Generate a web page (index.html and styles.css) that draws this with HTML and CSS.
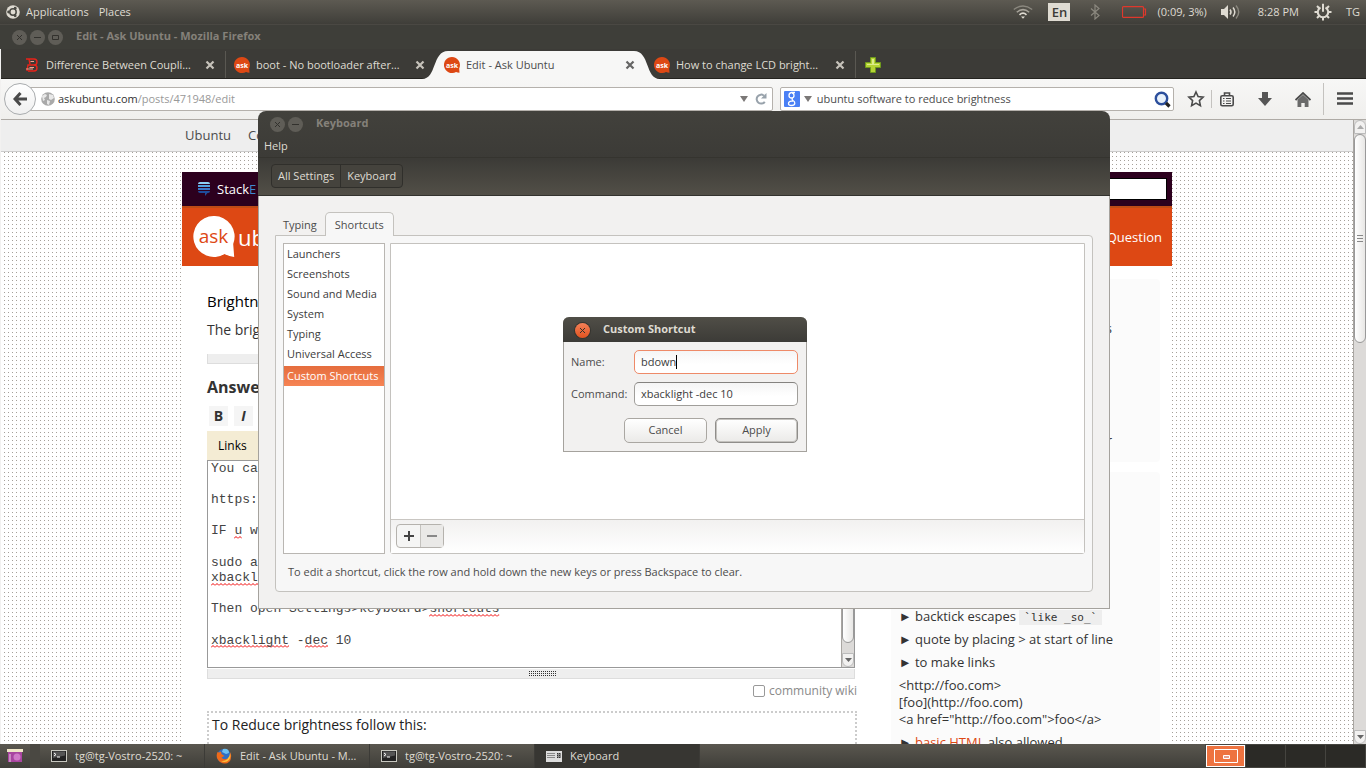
FILE: index.html
```html
<!DOCTYPE html>
<html lang="en">
<head>
<meta charset="utf-8">
<title>Edit - Ask Ubuntu</title>
<link rel="stylesheet" href="styles.css">
</head>
<body>
<svg class="defs" width="0" height="0" aria-hidden="true">
  <defs>
    <pattern id="wavy" width="4" height="3" patternUnits="userSpaceOnUse"><path d="M0 2.5 L2 .5 L4 2.5" fill="none" stroke="#f00000" stroke-width="1"/></pattern>
    <symbol id="ask" viewBox="0 0 16 16"><path d="M8 0a8 8 0 1 0 4 14.900q1.500.7 3.500.9l-.3-4.400A8 8 0 0 0 8 0z" fill="#dd4814"/><text x="8" y="10.500" text-anchor="middle" font-family="Open Sans, sans-serif" font-weight="700" font-size="7" fill="#fff">ask</text></symbol>
    <symbol id="x" viewBox="0 0 10 10"><path d="M1.500 1.500l7 7M8.500 1.500l-7 7" stroke="currentColor" stroke-width="2.200" opacity=".85"/></symbol>
    <symbol id="term" viewBox="0 0 16 12"><rect x=".5" y=".5" width="15" height="11" fill="#222" stroke="#c8c8c0"/><path d="M2 1.500h12v4L2 8z" fill="#555"/><path d="M3 3l2 1.500L3 6M6 7h3" fill="none" stroke="#fff"/></symbol>
  </defs>
</svg>

<div class="desktop">
  <header class="panel">
    <nav class="panel-menus">
      <svg width="14" height="14" viewBox="0 0 14 14"><circle cx="7" cy="7" r="6.800" fill="#dfdbd2"/><circle cx="7" cy="7" r="3.200" fill="none" stroke="#4b4a44" stroke-width="1.500"/><g fill="#4b4a44"><circle cx="2.600" cy="7" r="1.400"/><circle cx="9.200" cy="3.200" r="1.400"/><circle cx="9.200" cy="10.800" r="1.400"/></g></svg>
      <button class="plain">Applications</button>
      <button class="plain places">Places</button>
    </nav>
    <div class="tray">
      <svg class="wifi" width="20" height="14" viewBox="0 0 20 14" fill="none"><path d="M.8 4.500Q10-2.500 19.200 4.500" stroke="#8b887f" stroke-width="1.400"/><path d="M3.800 7.200Q10 2 16.200 7.200" stroke="#a8a49b" stroke-width="1.500"/><path d="M6.500 9.800Q10 6.500 13.500 9.800" stroke="#dfdbd2" stroke-width="1.600"/><path d="M8 11.500h4L10 13.800z" fill="#dfdbd2"/></svg>
      <span class="lang">En</span>
      <svg class="bt" width="10" height="16" viewBox="0 0 10 16"><path d="M1 4.500l8 7L5 15V1l4 3.500-8 7" fill="none" stroke="#8b887f" stroke-width="1.200"/></svg>
      <svg class="batt" width="25" height="12" viewBox="0 0 25 12"><path d="M1.500.6h19q1 0 1 1v8.800q0 1-1 1h-19q-1 0-1-1V1.600q0-1 1-1zM21.500 3h2v6h-2" fill="none" stroke="#df382c" stroke-width="1.200"/></svg>
      <span class="battery-text">(0:09, 3%)</span>
      <svg class="vol" width="20" height="16" viewBox="0 0 20 16" fill="none"><path d="M0 5h3l4-4v14l-4-4H0z" fill="#dfdbd2"/><path d="M9 5.500q2 2.500 0 5M12 3.500q3.600 4.500 0 9" stroke="#dfdbd2" stroke-width="1.500"/><path d="M15 1.500q5.500 6.500 0 13" stroke="#8b887f" stroke-width="1.400"/></svg>
      <span class="clock">8:28 PM</span>
      <svg class="gear" width="18" height="18" viewBox="0 0 18 18" fill="none" stroke="#dfdbd2"><path d="M6.500 4.500a5.200 5.200 0 1 0 5 0M9 .8v8" stroke-width="2"/><path d="M3 3l2 2M15 3l-2 2M.5 9h3M14.500 9h3M3 15l2-2M15 15l-2-2M9 14.500v3" stroke-width="2"/></svg>
      <span>TG</span>
    </div>
  </header>

  <div class="browser-title">
    <button class="wb" aria-label="Close"><svg width="7" height="7" viewBox="0 0 7 7"><path d="M1 1l5 5M6 1L1 6"/></svg></button>
    <button class="wb" aria-label="Minimize"><svg width="7" height="7" viewBox="0 0 7 7"><path d="M0 3.500h7"/></svg></button>
    <button class="wb" aria-label="Maximize"><svg width="7" height="7" viewBox="0 0 7 7"><path d="M.5 1.500h6v4h-6z"/></svg></button>
    <strong>Edit - Ask Ubuntu - Mozilla Firefox</strong>
  </div>

  <div class="browser">
    <div class="tabs">
      <div class="tab"><svg width="16" height="16" viewBox="0 0 16 16" fill="none"><path d="M2 2h8M4 14h6q3 0 3-3t-3-3q3 0 3-3t-3-3M5 2l1 5M3 14l1-6h6" stroke="#e8231a" stroke-width="1.400"/><path d="M6.500 4.500H10M5.500 10.500H10M2 12h7" stroke="#f3a08c" stroke-width="1.200"/></svg><a href="#">Difference Between Coupli…</a><button aria-label="Close tab"><svg width="10" height="10"><use href="#x"/></svg></button></div>
      <div class="tab"><svg width="16" height="16"><use href="#ask"/></svg><a href="#">boot - No bootloader after…</a><button aria-label="Close tab"><svg width="10" height="10"><use href="#x"/></svg></button></div>
      <div class="tab active"><svg class="curve left" width="28" height="28" viewBox="0 0 28 28"><path d="M0 28C15 28 10 0 26 0h2v28z" fill="#f7f7f6"/></svg><svg class="curve right" width="28" height="28" viewBox="0 0 28 28"><path d="M28 28C13 28 18 0 2 0H0v28z" fill="#f7f7f6"/></svg><svg width="16" height="16"><use href="#ask"/></svg><a href="#">Edit - Ask Ubuntu</a><button aria-label="Close tab"><svg width="10" height="10"><use href="#x"/></svg></button></div>
      <div class="tab last"><svg width="16" height="16"><use href="#ask"/></svg><a href="#">How to change LCD bright…</a><button aria-label="Close tab"><svg width="10" height="10"><use href="#x"/></svg></button></div>
      <button class="newtab" aria-label="New tab"><svg width="16" height="16" viewBox="0 0 16 16"><path d="M5.500.5h5v5h5v5h-5v5h-5v-5h-5v-5h5z" fill="#b5d334" stroke="#6f9a1c"/><path d="M7 2h2v5h5v1H2V7h5z" fill="#dcec8c"/></svg></button>
    </div>

    <div class="navbar">
      <button class="back" aria-label="Back"><svg width="14" height="14" viewBox="0 0 14 14"><path d="M7.500 1L2 7l5.500 6M2 7h12" fill="none" stroke="#4a4a4a" stroke-width="3"/></svg></button>
      <div class="urlbar">
        <svg width="14" height="14" viewBox="0 0 14 14"><circle cx="7" cy="7" r="6.800" fill="#a9a9a9"/><path d="M1 4l3-2 2 1-1 2-2 1 1 2-2 1zM8 2l4 1 1 3-3 2-2-1zM6 8l3 1-1 4-2-1z" fill="#e8e8e8"/></svg>
        <a class="address" href="#">askubuntu.com<span>/posts/471948/edit</span></a>
        <svg width="8" height="6" viewBox="0 0 8 6"><path d="M0 0h8L4 6z" fill="#7b7877"/></svg>
        <svg width="12" height="12" viewBox="0 0 12 12"><path d="M9.800 8.800A4.500 4.500 0 1 1 9 2.600" fill="none" stroke="#98a2ab" stroke-width="2"/><path d="M11.500 0v5.500H6z" fill="#98a2ab"/></svg>
      </div>
      <div class="searchbar">
        <svg width="16" height="16" viewBox="0 0 16 16"><rect width="16" height="16" rx="1" fill="#4a80f5"/><path d="M11 1.500H7.500Q5 2 5 4.500T7.500 7 10 4.500 8 2M8.500 7.200Q7.500 8.500 9 9.500q2 1.200 1.800 2.800Q10.500 14.500 7.500 14.500T4.500 12.500 7.500 10.200H9" fill="none" stroke="#fff" stroke-width="1.300"/></svg>
        <svg width="8" height="6" viewBox="0 0 8 6"><path d="M0 0h8L4 6z" fill="#7b7877"/></svg>
        <input aria-label="Search" value="ubuntu software to reduce brightness">
        <svg width="17" height="17" viewBox="0 0 17 17"><circle cx="7.500" cy="7.500" r="5.700" fill="#e8f1fa" stroke="#2c4f9c" stroke-width="2.400"/><path d="M12 12l3.500 3.500" stroke="#222" stroke-width="3.200"/></svg>
      </div>
      <div class="tools">
        <button aria-label="Bookmark"><svg width="18" height="18" viewBox="0 0 18 18"><path d="M9 2l2.100 4.600 5 .6-3.700 3.400 1 5L9 13.100l-4.400 2.500 1-5L1.900 7.200l5-.6z" fill="none" stroke="#4a4a4a" stroke-width="1.600"/></svg></button>
        <i class="rule"></i>
        <button class="list-btn" aria-label="Bookmarks menu"><svg width="14" height="15" viewBox="0 0 14 15" fill="none" stroke="#4a4a4a"><rect x=".8" y="3.800" width="12.400" height="10" rx="1.500" stroke-width="1.600"/><path d="M4.500 3V1h5v2" stroke-width="1.600"/><path d="M3 6.500h1.500M6 6.500h5M3 9h1.500M6 9h5M3 11.500h1.500M6 11.500h5"/></svg></button>
        <button class="down-btn" aria-label="Downloads"><svg width="14" height="14" viewBox="0 0 14 14"><path d="M4 0h6v6h4l-7 8-7-8h4z" fill="#565656"/></svg></button>
        <button class="home-btn" aria-label="Home"><svg width="16" height="15" viewBox="0 0 16 15"><path d="M8 2.700l5.500 5V15h-3.800v-4H6.300v4H2.500V7.700z" fill="#6a6a6a"/><path d="M.5 8L8 1l7.500 7" fill="none" stroke="#4a4a4a" stroke-width="1.800"/></svg></button>
        <i class="rule tall"></i>
        <button class="menu-btn" aria-label="Menu"><svg width="16" height="14" viewBox="0 0 16 14"><path d="M0 1.500h16M0 6.500h16M0 11.500h16" stroke="#4a4a4a" stroke-width="2.600"/></svg></button>
      </div>
    </div>

    <div class="viewport">
      <div class="page">
        <nav class="sitenav"><div><a href="#">Ubuntu</a><a href="#">Co</a></div></nav>
        <div class="site">
          <div class="stack">
            <svg width="12" height="14" viewBox="0 0 12 14"><path d="M0 2q0-2 2-2h8q2 0 2 2z" fill="#8fd0f5"/><path d="M0 3h12v2H0z" fill="#52a3e0"/><path d="M0 6h12v2H0z" fill="#3b78c8"/><path d="M0 9h12q0 2-2 2H9.500L7 14v-3H2Q0 11 0 9z" fill="#1f4d9c"/></svg>
            <a href="#">Stack<b>E</b></a>
            <input aria-label="Search site">
          </div>
          <div class="brand">
            <svg width="42" height="42" viewBox="0 0 42 42"><path d="M20.500 0a20.500 20.500 0 1 0 11 38q5 2.500 9.700 3l-1-13A20.500 20.500 0 0 0 20.500 0z" fill="#fff"/><text x="20.500" y="27" text-anchor="middle" font-family="Open Sans, sans-serif" font-size="19" fill="#dd4814">ask</text></svg>
            <span class="logo-text">ub</span>
            <a href="#">Question</a>
          </div>
          <div class="columns">
            <main>
              <h2 class="post-title">Brightn</h2>
              <p class="post-line">The brig</p>
              <div class="grip"></div>
              <h3>Answer</h3>
              <div class="format"><button aria-label="Bold"><b>B</b></button><button aria-label="Italic"><b><i>I</i></b></button></div>
              <div class="help-tabs"><button>Links</button></div>
              <div class="editor">
                <div class="edit-area">
                  <div class="marks" aria-hidden="true">
                    <div></div><div></div><div></div><div></div>
                    <div><svg style="margin-left:3ch;width:1ch"><rect width="100%" height="3" fill="url(#wavy)"/></svg></div>
                    <div></div><div></div>
                    <div><svg style="width:10ch"><rect width="100%" height="3" fill="url(#wavy)"/></svg></div>
                    <div></div>
                    <div><svg style="margin-left:28ch;width:9ch"><rect width="100%" height="3" fill="url(#wavy)"/></svg></div>
                    <div></div>
                    <div><svg style="width:10ch"><rect width="100%" height="3" fill="url(#wavy)"/></svg><svg style="margin-left:2ch;width:3ch"><rect width="100%" height="3" fill="url(#wavy)"/></svg></div>
                  </div>
                  <textarea aria-label="Answer text" spellcheck="false">You ca

https:

IF u w

sudo a
xbackl

Then open Settings&gt;keyboard&gt;shortcuts

xbacklight -dec 10</textarea>
                </div>
                <div class="scroll inner"><i class="thumb"></i><i class="trough"></i><i class="arrow"><svg width="7" height="4" viewBox="0 0 7 4"><path d="M0 0h7L3.500 4z" fill="#666"/></svg></i></div>
              </div>
              <div class="grip wide"><svg width="28" height="5" viewBox="0 0 28 5"><path d="M0 .5h28M0 2.500h28M0 4.500h28" stroke="#333" stroke-dasharray="1 1"/></svg></div>
              <label class="wiki"><input type="checkbox">community wiki</label>
              <div class="preview">To Reduce brightness follow this:</div>
            </main>
            <aside>
              <section class="tips edit-tips">
                <p>► fix grammatical or spelling errors</p>
                <p>► always respect the original author</p>
              </section>
              <section class="tips format-tips">
                <p>► backtick escapes <code>`like _so_`</code></p>
                <p>► quote by placing &gt; at start of line</p>
                <p>► to make links</p>
                <p class="sample">&lt;http://foo.com&gt;<br>[foo](http://foo.com)<br>&lt;a href="http://foo.com"&gt;foo&lt;/a&gt;</p>
                <p>► <a href="#">basic HTML</a> also allowed</p>
              </section>
            </aside>
          </div>
        </div>
      </div>
      <div class="scroll"><i class="arrow up"><svg width="7" height="4" viewBox="0 0 7 4"><path d="M0 4h7L3.500 0z" fill="#aaa"/></svg></i><i class="thumb"><svg width="6" height="8" viewBox="0 0 6 8"><path d="M0 .5h6M0 3.500h6M0 6.500h6" stroke="#888"/></svg></i><i class="trough"></i><i class="arrow"><svg width="7" height="4" viewBox="0 0 7 4"><path d="M0 0h7L3.500 4z" fill="#666"/></svg></i></div>
    </div>
  </div>

  <footer class="taskbar">
    <button class="show" aria-label="Show desktop"><svg width="16" height="14" viewBox="0 0 16 14"><path d="M0 0h16v3H0z" fill="#efe6c8"/><path d="M1 3h14v10H1z" fill="#a845a0"/><circle cx="10" cy="8" r="3.500" fill="#d07ac8"/><path d="M2 5h2v8H2z" fill="#c98ac2"/></svg></button>
    <i class="handle"></i>
    <button class="task"><svg width="16" height="12"><use href="#term"/></svg>tg@tg-Vostro-2520: ~</button>
    <button class="task"><svg width="16" height="16" viewBox="0 0 16 16"><circle cx="8" cy="8" r="7" fill="#2f6fc4"/><path d="M7 1q6-1 6 4l-3 1-4-2z" fill="#6fc0f0"/><path d="M1.500 4Q-1 10 4 14q6 3.500 10-1 2-4 .5-9-.5 5-3 6.500-4 2-6-1l3-1.500-3-2-.5-2.500-2 1z" fill="#ee6a1a"/><path d="M14 5q1.500 6-3 8.500-3 1-6-.5 4 .5 6.500-2T14 5z" fill="#fbc33c"/></svg>Edit - Ask Ubuntu - M…</button>
    <button class="task"><svg width="16" height="12"><use href="#term"/></svg>tg@tg-Vostro-2520: ~</button>
    <button class="task current"><svg width="16" height="11" viewBox="0 0 16 11"><path d="M0 0h16v11H0z" fill="#ddd"/><path d="M1.500 2.500h8M1.500 4.500h8M1.500 6.500h8M11 2.500h4M11 4.500h4M11 6.500h4" stroke="#333" stroke-dasharray="1 1"/><path d="M12 2v5M14 2v5" stroke="#333"/></svg>Keyboard</button>
    <div class="spaces">
      <button class="on" aria-label="Workspace 1"><svg width="24" height="14" viewBox="0 0 24 14" fill="none" stroke="#fff"><path d="M.5.5h23v13H.5z"/><path d="M9.500 6.500h6v3h-6z" fill="#e8a090"/></svg></button>
      <button aria-label="Workspace 2"></button><button aria-label="Workspace 3"></button><button aria-label="Workspace 4"></button>
    </div>
  </footer>

  <section class="window keyboard" aria-label="Keyboard">
    <div class="kb-head">
      <div class="wtitle">
        <button class="wb" aria-label="Close"><svg width="7" height="7" viewBox="0 0 7 7"><path d="M1 1l5 5M6 1L1 6"/></svg></button>
        <button class="wb" aria-label="Minimize"><svg width="7" height="7" viewBox="0 0 7 7"><path d="M0 3.500h7"/></svg></button>
        <strong>Keyboard</strong>
      </div>
      <div class="menubar"><button class="plain">Help</button></div>
      <div class="crumbbar"><div class="crumbs"><button>All Settings</button><button>Keyboard</button></div></div>
    </div>
    <div class="kb-body">
      <div class="kb-tabs"><button>Typing</button><button class="sel">Shortcuts</button></div>
      <div class="kb-page">
        <div class="panes">
          <ul>
            <li><button>Launchers</button></li><li><button>Screenshots</button></li><li><button>Sound and Media</button></li><li><button>System</button></li><li><button>Typing</button></li><li><button>Universal Access</button></li><li class="chosen"><button>Custom Shortcuts</button></li>
          </ul>
          <div class="bindings">
            <div class="rows"></div>
            <div class="addbar"><div><button aria-label="Add"><svg width="12" height="12" viewBox="0 0 12 12"><path d="M1 6h10M6 1v10" stroke="#444" stroke-width="2"/></svg></button><button class="minus" aria-label="Remove"><svg width="12" height="12" viewBox="0 0 12 12"><path d="M1 6h10" stroke="#888" stroke-width="2"/></svg></button></div></div>
          </div>
        </div>
        <p>To edit a shortcut, click the row and hold down the new keys or press Backspace to clear.</p>
      </div>
    </div>
  </section>

  <form class="window dialog" aria-label="Custom Shortcut">
    <div class="wtitle">
      <button type="button" class="wb hot" aria-label="Close"><svg width="7" height="7" viewBox="0 0 7 7"><path d="M1 1l5 5M6 1L1 6"/></svg></button>
      <strong>Custom Shortcut</strong>
    </div>
    <div class="fields">
      <label for="name">Name:</label><div class="field focus"><input id="name" value="bdown" size="5"><i class="caret"></i></div>
      <label for="command">Command:</label><div class="field"><input id="command" value="xbacklight -dec 10"></div>
    </div>
    <div class="actions"><button type="button">Cancel</button><button type="button" class="default">Apply</button></div>
  </form>
</div>
</body>
</html>
```
FILE: styles.css
```css
* { box-sizing: border-box; }
body { margin: 0; font: 11px/16px "Open Sans", "Noto Sans", sans-serif; color: #4c4c4c; }
button, input, textarea { font: inherit; color: inherit; margin: 0; padding: 0; border: 0; background: none; }
input { min-width: 0; outline: 0; }
a { color: inherit; text-decoration: none; white-space: nowrap; }
svg { display: block; flex: none; }
p, h2, h3, ul { margin: 0; padding: 0; list-style: none; font-weight: 400; }
.defs { position: absolute; }
.desktop { position: relative; height: 100vh; display: flex; flex-direction: column; overflow: hidden; }

/* top panel */
.panel { flex: none; height: 25px; display: flex; justify-content: space-between; padding: 0 6px; background: linear-gradient(#5d5a52, #3f3e39); border-bottom: 1px solid #4a4843; color: #dfdbd2; }
.panel-menus, .tray { display: flex; align-items: center; }
.panel-menus { gap: 6px; }
.places { margin-left: 4px; }
.wifi { margin-right: 15px; }
.lang { width: 22px; height: 18px; background: #dfdbd2; color: #3c3b37; text-align: center; font-weight: 600; font-size: 13px; line-height: 19px; margin-right: 20px; }
.bt { margin-right: 22px; }
.batt { margin-right: 10px; }
.battery-text { margin-right: 14px; }
.vol { margin-right: 17px; }
.clock { margin-right: 15px; }
.gear { margin-right: 14px; }

/* window title bars */
.browser-title { flex: none; height: 24px; display: flex; align-items: center; gap: 3px; padding-left: 12px; background: #3e3e39; color: #85817a; }
.browser-title strong { margin: 0 0 2px 10px; }
.wb { width: 15px; height: 15px; border-radius: 50%; background: #5f5d57; display: grid; place-items: center; }
.wb svg { fill: none; stroke: #32312d; }
.wb.hot { background: linear-gradient(#f38058, #e2531f); box-shadow: 0 0 0 1px #35342f; }

/* browser */
.browser { flex: 1; min-height: 0; display: flex; flex-direction: column; border-left: 1px solid #f2f1f0; }
.tabs { flex: none; height: 30px; display: flex; padding: 2px 0 0 15px; background: #3c3b37; border-bottom: 1px solid #24231f; color: #dfdbd2; }
.tab { position: relative; flex: 0 1 210px; display: flex; align-items: center; gap: 6px; padding: 0 10px 0 8px; border-right: 1px solid #5a5852; }
.tab a { flex: 1; overflow: hidden; }
.tab > svg, .tab > a, .tab > button { z-index: 1; }
.tab:nth-child(2) { border-right-color: transparent; }
.tab.active { border: 0; padding-right: 11px; color: #4c4c4c; background: linear-gradient(90deg, transparent 14px, #f7f7f6 14px calc(100% - 14px), transparent calc(100% - 14px)); margin-bottom: -1px; }
.tab > .curve { position: absolute; top: 0; z-index: 0; }
.curve.left { left: -14px; }
.curve.right { right: -14px; }
.newtab { margin-left: 9px; }
.navbar { flex: none; height: 41px; display: flex; align-items: center; padding: 0 13px 0 3px; background: linear-gradient(#f7f7f6, #f0efed); border-bottom: 1px solid #aeaaa5; }
.back { z-index: 1; flex: none; width: 32px; height: 32px; border-radius: 50%; border: 1px solid #a9acae; background: linear-gradient(#fff, #f0f0f0); display: grid; place-items: center; }
.urlbar, .searchbar { height: 24px; display: flex; align-items: center; border: 1px solid #b5b1ac; border-radius: 2px; background: #fff; }
.urlbar { flex: 725 1 0; margin-left: -16px; padding: 0 5px 0 20px; }
.address { flex: 1; margin-left: 3px; color: #333; }
.address span { color: #999; }
.urlbar svg:last-child { margin-left: 7px; }
.searchbar { flex: 387 1 0; margin-left: 7px; padding: 0 2px 0 3px; }
.searchbar svg + svg { margin-left: 4px; }
.searchbar input { flex: 1; margin-left: 5px; }
.tools { display: flex; align-items: center; padding-left: 13px; }
.rule { width: 1px; height: 18px; margin: 0 8px 0 6px; background: #c4c2bf; }
.rule.tall { height: 32px; margin: 0 13px 0 12px; }
.list-btn { margin-right: 24px; }
.down-btn { margin-right: 23px; }

/* web page */
.viewport { flex: 1; min-height: 0; display: flex; }
.page { flex: 1; overflow: hidden; background: conic-gradient(at 1px 1px, transparent 75%, #a5a09a 75%) 3px 0 / 4px 4px #fff; }
.sitenav { height: 32px; background: #eee; border-bottom: 1px solid #ccc; font-size: 13px; line-height: 31px; }
.sitenav div { max-width: 990px; margin: 0 auto; padding-left: 3px; display: flex; gap: 17px; }
.site { max-width: 990px; margin: 20px auto 0; background: #fff; }
.stack { height: 34px; background: #2c001e; color: #fff; display: flex; align-items: center; padding: 0 5px 0 16px; font-size: 13px; }
.stack a { flex: 1; margin-left: 7px; }
.stack b { color: #3f8bd0; font-weight: 400; }
.stack input { width: 180px; height: 22px; background: #fff; border: 1px solid #000; }
.brand { height: 60px; display: flex; align-items: center; padding: 0 10px 0 11px; background: #dd4814; border-top: 2px solid #bd4a16; color: #fff; }
.logo-text { flex: 1; margin-left: 3px; font-size: 22px; }
.brand a { font-size: 13px; line-height: 20px; }
.columns { display: flex; justify-content: space-between; padding: 0 12px 0 25px; color: #333; }
main { flex: 0 1 650px; padding-top: 25px; }
.post-title { font-size: 15px; line-height: 20px; color: #000; }
.post-line { font-size: 14px; line-height: 20px; margin-top: 9px; }
.grip { height: 10px; margin: 14px 2px 0 0; background: #eee; border: 1px solid #ddd; border-top: 0; }
h3 { font-size: 16px; line-height: 22px; font-weight: 700; margin-top: 12px; }
.format { display: flex; gap: 6px; margin: 8px 0 5px 2px; }
.format button { width: 19px; height: 20px; background: #f5f5f5; font-size: 14px; line-height: 20px; }
.help-tabs { background: #f4ecd4; }
.help-tabs button { height: 29px; padding: 0 11px; font-size: 12px; color: #000; }
.editor { display: flex; height: 208px; margin-right: 2px; border: 1px solid #999; font: 13px/1.2 "Liberation Mono", monospace; }
.edit-area { flex: 1; display: grid; }
.edit-area > * { grid-area: 1 / 1; }
.marks { padding-left: 3px; }
.marks div { height: 1.2em; display: flex; align-items: flex-end; }
.marks svg { height: 3px; }
.edit-area textarea { z-index: 1; padding: 0 3px; resize: none; outline: 0; overflow: hidden; color: #444; }
.grip.wide { margin-top: 1px; padding-left: 24px; display: grid; place-items: center; }
.wiki { display: flex; align-items: center; justify-content: flex-end; gap: 4px; margin-top: 3px; font-size: 12px; line-height: 18px; color: #8a8a8a; }
.wiki input { appearance: none; width: 12px; height: 12px; border: 1px solid #999; border-radius: 2px; background: #fff; }
.preview { margin-top: 11px; padding: 2px 3px; height: 100px; border: 2px dotted #ccc; font-size: 14px; line-height: 20px; color: #222; }
aside { flex: 0 1 266px; padding-top: 13px; }
.tips { background: #fbfbfb; border-radius: 4px; padding: 0 8px; font-size: 13px; line-height: 17px; }
.tips p { margin-bottom: 6px; white-space: nowrap; }
.tips p a { color: #dd4814; }
.edit-tips { height: 183px; margin-bottom: 10px; padding: 41px 48px 13px 0; display: flex; flex-direction: column; justify-content: space-between; align-items: flex-end; }
.edit-tips p { margin: 0; }
.format-tips { padding-top: 136px; }
.tips code { padding: 1px 5px; background: #eee; font: 11px/14px "DejaVu Sans Mono", monospace; }
.scroll { flex: none; width: 13px; display: flex; flex-direction: column; background: #dcdad8; border-left: 1px solid #a9a6a2; }
.scroll .arrow { height: 14px; background: #f2f1f0; border: 1px solid #bbb; border-radius: 0 0 6px 6px; display: grid; place-items: center; }
.scroll .up { border-radius: 6px 6px 0 0; }
.scroll .thumb { flex: 208 1 0; background: linear-gradient(90deg, #fff, #e8e7e5); border: 1px solid #999; border-radius: 6px; display: grid; place-items: center; }
.scroll .trough { flex: 388 1 0; }
.scroll.inner .thumb { flex: 182 1 0; }
.scroll.inner .trough { flex: 10 1 0; }

/* taskbar */
.taskbar { flex: none; height: 24px; display: flex; align-items: center; background: linear-gradient(#5a574f, #3f3e39); color: #dfdbd2; padding-left: 7px; }
.handle { width: 10px; height: 24px; margin-left: 7px; background: #4a4842; }
.task { flex: 0 1 165px; height: 24px; display: flex; align-items: center; gap: 8px; padding-left: 11px; border-right: 1px solid #3c3b37; white-space: nowrap; }
.task.current { background: #373632; }
.spaces { margin-left: auto; height: 24px; display: flex; gap: 1px; padding: 1px; background: #45443f; }
.spaces button { width: 39px; background: #2b2a26; display: grid; place-items: center; }
.spaces .on { background: #ee7340; border: 1px solid #fff; }

/* floating windows */
.window { position: absolute; z-index: 5; }
.wtitle { display: flex; align-items: center; gap: 3px; height: 25px; padding: 2px 0 0 12px; }
.wtitle strong { margin: 0 0 4px 10px; }
.keyboard { left: 258px; top: 111px; width: 852px; }
.kb-head { background: linear-gradient(#42413c, #3c3b37 46px, #3c3b37 48px, #524f47); border-radius: 8px 8px 0 0; border-bottom: 1px solid #33322e; color: #dfdbd2; }
.kb-head .wtitle { color: #85817a; }
.menubar { height: 22px; padding: 2px 6px; border-bottom: 1px solid #35342f; }
.crumbbar { height: 37px; padding: 6px 13px; }
.crumbs { display: inline-flex; border: 1px solid #302f2b; border-radius: 4px; background: #45433d; }
.crumbs button { height: 22px; padding: 0 6px; }
.crumbs button + button { border-left: 1px solid #302f2b; }
.kb-body { padding: 16px; background: #f2f1f0; border: 1px solid #a5a29d; border-top: 0; }
.kb-tabs { display: flex; align-items: flex-end; height: 24px; margin-bottom: -1px; }
.kb-tabs button { height: 22px; padding: 0 8px; }
.kb-tabs .sel { position: relative; height: 24px; padding: 0 9px; border: 1px solid #c4c2be; border-bottom: 0; border-radius: 5px 5px 0 0; background: #f7f7f7; }
.kb-page { padding: 7px; border: 1px solid #c4c2be; border-radius: 0 4px 4px 4px; background: #f7f7f7; }
.panes { display: flex; gap: 5px; }
.panes ul { flex: none; width: 102px; height: 311px; background: #fff; border: 1px solid #b9b6b2; color: #3c3c3c; }
.panes li button { width: 100%; height: 20px; padding: 0 3px; text-align: left; white-space: nowrap; }
.panes .chosen { margin-top: 2px; background: linear-gradient(#e56d3d, #f68454); color: #fff; }
.bindings { flex: 1; display: flex; flex-direction: column; border: 1px solid #c4c2be; border-radius: 0 0 3px 3px; }
.rows { flex: 1; background: #fff; }
.addbar { height: 34px; padding: 4px 5px; border-top: 1px solid #c9c6c2; background: linear-gradient(#f2f1f0, #fff); }
.addbar div { display: inline-flex; border: 1px solid #b5b2ad; border-radius: 4px; background: #f5f5f4; }
.addbar button { width: 23px; height: 22px; display: grid; place-items: center; }
.addbar .minus { border-left: 1px solid #c4c2be; background: #eae9e7; }
.kb-page p { padding: 10px 5px 4px; white-space: nowrap; }

.dialog { left: 563px; top: 317px; width: 244px; background: #f2f1f0; border: 1px solid #a5a29d; border-top: 0; border-radius: 6px 6px 0 0; }
.dialog .wtitle { margin: 0 -1px; background: linear-gradient(#504e47, #3c3b37); border-radius: 6px 6px 0 0; color: #dfdbd2; }
.fields { display: grid; grid-template-columns: 55px 1fr; gap: 8px; align-items: center; padding: 8px 8px 12px 7px; }
.field { height: 24px; display: flex; align-items: center; padding: 0 6px; border: 1px solid #a09e9a; border-top-color: #858380; border-radius: 5px; background: linear-gradient(#f5f5f5, #fff 60%); color: #3c3c3c; }
.field input { width: 100%; }
.field.focus { border-color: #ee8a68; }
.field.focus input { width: auto; field-sizing: content; }
.caret { width: 1px; height: 14px; background: #000; }
.actions { display: flex; justify-content: flex-end; gap: 8px; padding: 0 8px 8px; }
.actions button { width: 83px; height: 25px; padding-bottom: 1px; border: 1px solid #aaa7a2; border-radius: 5px; background: linear-gradient(#fff, #ebeae8); }
.actions .default { border-color: #8f8d8a; box-shadow: inset 0 0 0 1px #c4c2be; }
```
